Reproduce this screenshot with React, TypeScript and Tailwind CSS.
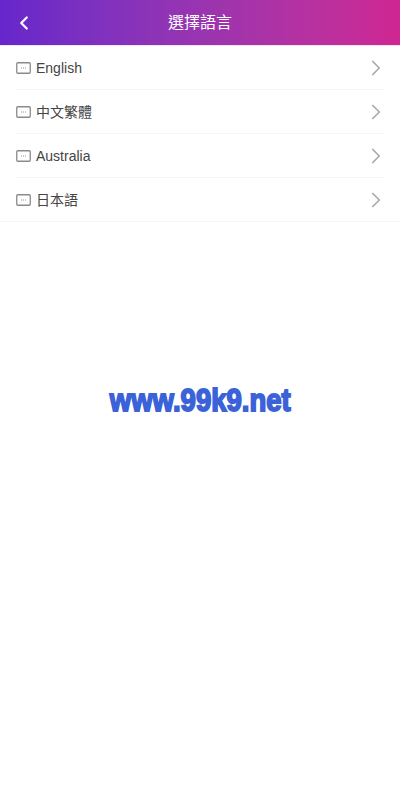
import { ChevronRight, ChevronLeft } from 'lucide-react'

const languages = ['English', '中文繁體', 'Australia', '日本語']

function LangIcon() {
  return (
    <svg width="15" height="12" viewBox="0 0 15 12" fill="none" className="shrink-0">
      <rect x="0.75" y="0.75" width="13.5" height="10.5" rx="1" stroke="#8a8a8a" strokeWidth="1.3" />
      <rect x="5" y="5.5" width="1" height="1" fill="#999" />
      <rect x="7" y="5.5" width="1" height="1" fill="#999" />
      <rect x="9" y="5.5" width="1" height="1" fill="#999" />
    </svg>
  )
}

export default function App() {
  return (
    <div className="min-h-[800px] bg-white font-['Liberation_Sans','Noto_Sans_CJK_TC',sans-serif]">
      <header className="h-[46px] flex items-center justify-between px-[13px] bg-gradient-to-r from-[#6626cb] to-[#cf2692] border-b border-[#f3e3f3]">
        <ChevronLeft size={22} strokeWidth={2.4} className="text-white" />
        <h1 className="text-base text-white">選擇語言</h1>
        <div className="w-[22px]" />
      </header>

      <ul>
        {languages.map((lang, i) => (
          <li key={lang} className={i === languages.length - 1 ? 'border-b border-[#f5f5f5] px-4' : 'px-4'}>
            <div className={i === languages.length - 1 ? 'h-[43px] flex items-center' : 'h-[44px] flex items-center border-b border-[#f5f5f5]'}>
              <LangIcon />
              <span className="ml-[5px] text-sm text-[#444]">{lang}</span>
              <ChevronRight size={26} strokeWidth={1.6} className="ml-auto -mr-[5px] text-[#aaa]" />
            </div>
          </li>
        ))}
      </ul>

      <div className="mt-[156px] flex justify-center">
        <span className="text-[32px] leading-[44px] font-bold text-[#3b62d8] whitespace-nowrap scale-x-[0.86] [-webkit-text-stroke:1.8px_#3b62d8]">
          www.99k9.net
        </span>
      </div>
    </div>
  )
}
